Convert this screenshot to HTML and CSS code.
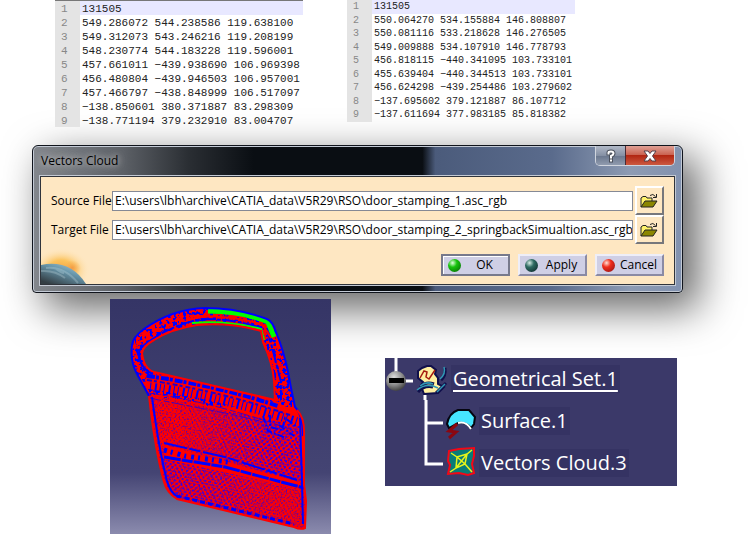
FILE: index.html
```
<!DOCTYPE html>
<html lang="en">
<head>
<meta charset="utf-8">
<title>Vectors Cloud</title>
<link rel="stylesheet" href="styles.css">
</head>
<body>
<section class="files">
  <ol class="listing listing-source">
    <li><span>1</span>131505</li>
    <li><span>2</span>549.286072 544.238586 119.638100</li>
    <li><span>3</span>549.312073 543.246216 119.208199</li>
    <li><span>4</span>548.230774 544.183228 119.596001</li>
    <li><span>5</span>457.661011 −439.938690 106.969398</li>
    <li><span>6</span>456.480804 −439.946503 106.957001</li>
    <li><span>7</span>457.466797 −438.848999 106.517097</li>
    <li><span>8</span>−138.850601 380.371887 83.298309</li>
    <li><span>9</span>−138.771194 379.232910 83.004707</li>
  </ol>
  <ol class="listing listing-target">
    <li><span>1</span>131505</li>
    <li><span>2</span>550.064270 534.155884 146.808807</li>
    <li><span>3</span>550.081116 533.218628 146.276505</li>
    <li><span>4</span>549.009888 534.107910 146.778793</li>
    <li><span>5</span>456.818115 −440.341095 103.733101</li>
    <li><span>6</span>455.639404 −440.344513 103.733101</li>
    <li><span>7</span>456.624298 −439.254486 103.279602</li>
    <li><span>8</span>−137.695602 379.121887 86.107712</li>
    <li><span>9</span>−137.611694 377.983185 85.818382</li>
  </ol>
</section>

<form class="dialog">
  <header class="titlebar">
    <h1>Vectors Cloud</h1>
    <div class="controls">
      <button type="button" class="help" aria-label="Help">
        <svg width="12" height="14" viewBox="0 0 12 14"><g fill="none" stroke-linecap="square"><path d="M3.5 4.5V3.5Q3.5 2.5 6 2.5Q8.5 2.5 8.5 4.5Q8.5 6 6 7V8.5M6 11.5V11.6" stroke="#4a505c" stroke-width="4"/><path d="M3.5 4.5V3.5Q3.5 2.5 6 2.5Q8.5 2.5 8.5 4.5Q8.5 6 6 7V8.5M6 11.5V11.6" stroke="#fff" stroke-width="2"/></g></svg>
      </button>
      <button type="button" class="close" aria-label="Close">
        <svg width="14" height="12" viewBox="0 0 14 12"><path d="M1 1H5L7 3.5L9 1H13L9.5 6L13 11H9L7 8.5L5 11H1L4.5 6Z" fill="#fff" stroke="#53404a"/></svg>
      </button>
    </div>
  </header>
  <div class="panel">
    <svg class="planet" width="48" height="36" viewBox="0 0 48 36">
      <defs>
        <radialGradient id="glow"><stop offset="0" stop-color="#f5a540"/><stop offset=".45" stop-color="#fbc35d"/><stop offset="1" stop-color="#fee7c2" stop-opacity="0"/></radialGradient>
        <radialGradient id="flare"><stop offset="0" stop-color="#f39a45"/><stop offset="1" stop-color="#f7b155" stop-opacity="0"/></radialGradient>
        <linearGradient id="globe" x1="1" y1="0" x2=".2" y2="1"><stop offset="0" stop-color="#b7d2da"/><stop offset=".45" stop-color="#6897ac"/><stop offset="1" stop-color="#333d43"/></linearGradient>
      </defs>
      <ellipse cx="20" cy="22" rx="29" ry="22" fill="url(#glow)"/>
      <ellipse cx="31" cy="20" rx="9" ry="8" fill="url(#flare)"/>
      <path d="M0 17Q29 11 45 36H0Z" fill="url(#globe)"/>
      <path d="M5 20Q23 18 37 35M14 20Q20 25 23 25M0 23Q14 22 24 30" fill="none" stroke="#c5dce0" stroke-width="2" opacity=".3"/>
    </svg>
    <div class="field">
      <label for="source">Source File</label>
      <input id="source" type="text" value="E:\users\lbh\archive\CATIA_data\V5R29\RSO\door_stamping_1.asc_rgb">
      <button type="button" class="browse" aria-label="Browse source file">
        <svg width="18" height="16" viewBox="0 0 18 16"><path d="M1 14V5L3 3.5H6L7 5H12V8" fill="#fff36b" stroke="#222"/><path d="M1 14L5 8H17L13 14Z" fill="#8b8600" stroke="#222"/><path d="M10 2.5Q13 0 15.5 3.5M16.5 1V4.5H13" fill="none" stroke="#222"/></svg>
      </button>
    </div>
    <div class="field">
      <label for="target">Target File</label>
      <input id="target" type="text" value="E:\users\lbh\archive\CATIA_data\V5R29\RSO\door_stamping_2_springbackSimualtion.asc_rgb">
      <button type="button" class="browse" aria-label="Browse target file">
        <svg width="18" height="16" viewBox="0 0 18 16"><path d="M1 14V5L3 3.5H6L7 5H12V8" fill="#fff36b" stroke="#222"/><path d="M1 14L5 8H17L13 14Z" fill="#8b8600" stroke="#222"/><path d="M10 2.5Q13 0 15.5 3.5M16.5 1V4.5H13" fill="none" stroke="#222"/></svg>
      </button>
    </div>
    <div class="actions">
      <button type="button" class="action default"><i class="lamp green"></i><span>OK</span></button>
      <button type="button" class="action"><i class="lamp dark"></i><span>Apply</span></button>
      <button type="button" class="action"><i class="lamp red"></i><span>Cancel</span></button>
    </div>
  </div>
</form>

<section class="results">
  <svg class="door" width="221" height="235" viewBox="0 0 221 235" role="img" aria-label="Door point cloud">
    <defs>
      <linearGradient id="sky" x1="0" y1="0" x2="0" y2="1"><stop offset="0" stop-color="#353566"/><stop offset=".74" stop-color="#444473"/><stop offset="1" stop-color="#8b8bae"/></linearGradient>
      <pattern id="dots" width="5" height="6" patternUnits="userSpaceOnUse" patternTransform="rotate(12)"><path d="M0 1H2V3H0ZM2.5 4H4.5V6H2.5Z" fill="#20f"/></pattern>
      <pattern id="fine" width="4" height="5" patternUnits="userSpaceOnUse" patternTransform="rotate(12)"><path d="M0 0H1V1.5H0ZM2 3H3V4H2Z" fill="#7000a0"/></pattern>
      <filter id="speckle" x="0" y="0" width="1" height="1"><feTurbulence type="fractalNoise" baseFrequency=".3" numOctaves="2" seed="4"/><feColorMatrix values="0 0 0 0 0  0 0 0 0 0  0 0 0 0 1  14 0 0 0 -7.4"/></filter>
      <filter id="grain" x="0" y="0" width="1" height="1"><feTurbulence type="fractalNoise" baseFrequency=".55" numOctaves="2" seed="9"/><feColorMatrix values="0 0 0 0 0  0 0 0 0 0  0 0 0 0 1  14 0 0 0 -8.4"/></filter>
      <linearGradient id="fade" x1="0" y1="0" x2="1" y2="0"><stop offset="0" stop-color="#fff"/><stop offset=".5" stop-color="#ccc"/><stop offset=".75" stop-color="#333"/></linearGradient>
      <linearGradient id="rise" x1="0" y1="0" x2="1" y2="0"><stop offset=".3" stop-color="#000"/><stop offset=".7" stop-color="#fff"/></linearGradient>
      <mask id="lowmask"><rect width="221" height="235" fill="url(#fade)"/></mask>
      <mask id="highmask"><rect width="221" height="235" fill="url(#rise)"/></mask>
      <clipPath id="frame"><path clip-rule="evenodd" d="M22 46Q23 38 34 30Q62 10 95 9Q128 9 157 20Q163 23 166 33Q174 53 178 73Q181 90 185 108Q194 117 194 137V185L196 202L195 229Q191 231 184 228L67 200Q57 194 54 183Q45 151 39 97L27 75Q20 62 22 46ZM32 54Q34 70 44 73L165 101L164 82Q163 65 153 43L151 32Q120 23 87 26Q61 30 44 41Q33 47 32 54Z"/></clipPath>
      <clipPath id="body"><path d="M38 96L190 127L194 185L196 229L184 228L67 200Q56 190 54 183Q46 148 38 96Z"/></clipPath>
    </defs>
    <rect width="221" height="235" fill="url(#sky)"/>
    <g clip-path="url(#frame)">
      <rect width="221" height="235" fill="#f00"/>
      <rect width="221" height="108" filter="url(#speckle)"/>
      <g clip-path="url(#body)">
        <rect y="90" width="221" height="145" fill="#f00"/>
        <rect y="90" width="221" height="145" fill="url(#fine)"/>
        <rect y="90" width="221" height="145" filter="url(#grain)" opacity=".4"/>
        <path d="M70 105L194 125V186L80 155Z" fill="url(#dots)" mask="url(#highmask)"/>
        <path d="M50 158L195 191V235L60 200Z" fill="url(#dots)" mask="url(#lowmask)"/>
      </g>
      <path d="M36 82Q105 91 187 119" fill="none" stroke="#f00" stroke-width="15"/>
      <path d="M37 77Q105 86 168 107" fill="none" stroke="#00f" stroke-width="4" stroke-dasharray="8 1 3 2"/>
      <path d="M37 81Q110 92 180 116" fill="none" stroke="#20c" stroke-width="2" stroke-dasharray="5 2 3 3"/>
      <path d="M40 88Q105 96 188 123" fill="none" stroke="#00f" stroke-width="9" stroke-dasharray="1 4 2 3 1 3"/>
      <path d="M38 94Q105 103 188 133M39 99L120 115L150 122" fill="none" stroke="#40b" stroke-dasharray="12 3 6 2"/>
      <path d="M55 146L190 183L190 190L54 160Z" fill="#f00"/>
      <path d="M54 144L115 158L187 181" fill="none" stroke="#00f" stroke-width="2" stroke-dasharray="24 2 11 3"/>
      <path d="M54 158L115 168L194 189" fill="none" stroke="#00f" stroke-width="3" stroke-dasharray="17 1 11 1"/>
      <path d="M54 151L75 157L118 163" fill="none" stroke="#00f" stroke-width="5" stroke-dasharray="3 4 2 5"/>
      <path d="M153 117L158 132L176 139M160 116V128L172 131L175 119L187 128M169 126L184 137" fill="none" stroke="#00f" stroke-width="2" stroke-dasharray="7 2 2 2"/>
      <path d="M29 53Q31 75 43 77M34 46Q60 26 92 20Q127 20 154 30M157 30L163 52L171 83V101" fill="none" stroke="#00f" stroke-width="2" stroke-dasharray="14 2 4 1"/>
      <path d="M98 12Q133 12 158 23L164 38" fill="none" stroke="#0f0" stroke-width="5"/>
      <path d="M82 24Q116 21 151 30L154 41" fill="none" stroke="#0f0" stroke-width="2"/>
      <path d="M83 17Q125 16 153 26L161 39" fill="none" stroke="#f00" stroke-width="2"/>
      <path d="M45 190Q47 197 67 197L184 225" fill="none" stroke="#00f" stroke-width="3" stroke-dasharray="5 3"/>
    </g>
    <g fill="none">
      <path d="M39 97L27 75Q20 62 22 46Q23 38 34 30Q62 10 95 9Q128 9 157 20Q163 23 166 33Q174 53 178 73Q181 90 185 108Q193 116 193 137" stroke="#00f" stroke-width="2"/>
      <path d="M187 111Q195 119 194 137V185L196 202L195 229Q191 231 184 228L67 200Q57 194 54 183Q45 151 39 97" stroke="#f00" stroke-width="2"/>
      <path d="M190 119L192 185L193 225M42 98Q49 151 57 182Q60 193 68 198" stroke="#00f" stroke-width="2"/>
      <path d="M165 101L44 73Q34 70 32 54Q33 47 44 41Q61 30 87 26Q120 23 151 32L153 43Q163 65 164 82L165 101" stroke="#f00" stroke-width="2"/>
      <path d="M34 46Q24 54 33 67Q37 73 43 75" stroke="#00f" stroke-width="2"/>
    </g>
  </svg>

  <ul class="tree">
    <li class="node">
      <svg width="31" height="42" viewBox="0 0 31 42"><defs><radialGradient id="ball" cx=".4" cy=".3" r=".7"><stop offset="0" stop-color="#ddd"/><stop offset=".6" stop-color="#888"/><stop offset="1" stop-color="#444"/></radialGradient></defs><path d="M11 0V15M19 23H28" stroke="#fff" stroke-width="3"/><circle cx="11" cy="23" r="10" fill="url(#ball)"/><path d="M4 22.500H19" stroke="#000" stroke-width="5"/></svg>
      <svg width="34" height="42" viewBox="0 0 34 42"><path d="M9 37V42" stroke="#fff" stroke-width="3"/><path d="M2 13L6 10L11 8H15L20 12L19 16L22 20V26L28 29L22 35L8 36L5 28L7 24L2 20Z" fill="#fff0a0" stroke="#10104b" stroke-width="2"/><path d="M4 20L8 13L11 14L10 19L13 21L19 12" fill="none" stroke="#a51b10" stroke-width="1.500"/><path d="M2 34Q8 27 17 29M4 29Q10 23 18 26M29 10Q30 18 25 22M20 35L30 25" fill="none" stroke="#10104b" stroke-width="3"/><path d="M1 32Q8 26 17 28L22 30M4 28Q10 23 17 26M28 9Q30 16 24 21M21 34L29 26" fill="none" stroke="#3199b5" stroke-width="1.500"/></svg>
      <span class="name current">Geometrical Set.1</span>
    </li>
    <li>
      <ul class="children">
        <li class="node">
          <svg width="21" height="42" viewBox="0 0 21 42"><path d="M3 0V42M3 23H20" stroke="#fff" stroke-width="3"/></svg>
          <svg width="34" height="42" viewBox="0 0 34 42"><path d="M3 24Q5 13 14 10H25L31 17L30 24L27 28Q22 22 14 23L5 28Z" fill="#46e5ff" stroke="#050510" stroke-width="2"/><path d="M14 23Q22 21 27 29" fill="none" stroke="#fff" stroke-width="2"/><path d="M13 24L5 31L12 32L5 38" fill="none" stroke="#8b0710" stroke-width="3"/></svg>
          <span class="name">Surface.1</span>
        </li>
        <li class="node">
          <svg width="21" height="42" viewBox="0 0 21 42"><path d="M3 0V22H20" fill="none" stroke="#fff" stroke-width="3"/></svg>
          <svg width="34" height="42" viewBox="0 0 34 42"><path d="M5 9L15 7L30 6V14L28 22L30 31L24 33L15 31L4 32L6 23L4 19Z" fill="#087c77" stroke="#f40716" stroke-width="2"/><path d="M7 11L13 15L23 12L28 8M13 15L12 26L21 22L23 12L12 26L6 30M21 22L28 30M13 15L21 22" fill="none" stroke="#e7f51a" stroke-width="1.500"/></svg>
          <span class="name">Vectors Cloud.3</span>
        </li>
      </ul>
    </li>
  </ul>
</section>
</body>
</html>
```
FILE: styles.css
```
* { box-sizing: border-box; }

body {
  margin: 0;
  background: #fff;
  color: #000;
  font: 12px/16px "Open Sans", "Noto Sans", sans-serif;
  overflow: hidden;
}

ol, ul, h1 { margin: 0; padding: 0; list-style: none; }
svg { display: block; flex: none; }

.files {
  display: flex;
  align-items: flex-start;
  gap: 44px;
  padding: 0 55px;
}

.listing {
  display: grid;
  grid-auto-rows: 14px;
  flex: 0 1 248px;
  color: #222;
  font: 11px/16px "Liberation Mono", monospace;
  white-space: pre;
  background: linear-gradient(90deg, #e4e4e4 25px, transparent 25px);
}

.listing-source { border-top: 1px solid #777; }
.listing-target { flex-basis: 228px; font-size: 10px; grid-auto-rows: 1fr; height: 122px; line-height: 13px; }
.listing li { display: flex; }
.listing li:first-child { background: linear-gradient(90deg, #e4e4e4 25px, #e8e8ff 25px); }
.listing span { width: 27px; padding-left: 6px; flex: none; color: #888; }

.dialog {
  margin: 18px 65px 0 32px;
  padding: 0 7px 7px;
  border: 1px solid #10141c;
  border-radius: 6px 6px 4px 4px;
  background: linear-gradient(90deg, #83878d 0, #5c6066 14%, #2a2e33 24%, #0a0e13 34%, #0a0e13 60%, #4b5b7b 62%, #5a6b8c 80%, #8d9bb3 92%, #8292af 100%);
  box-shadow: inset 0 0 0 1px #c3cad5, 14px 14px 40px 2px rgba(0, 0, 0, .6);
}

.titlebar { display: flex; justify-content: space-between; height: 30px; }
.titlebar h1 {
  padding: 6px 1px;
  font-size: 12px;
  font-weight: 400;
  line-height: 17px;
  text-shadow: 0 0 6px #ccc, 0 0 10px #bbb;
}

.controls {
  display: flex;
  height: 20px;
  border: 1px solid #d0d5de;
  border-top: 0;
  border-radius: 0 0 5px 5px;
  overflow: hidden;
}
.controls button { display: grid; place-items: center; margin: 0; padding: 0; border: 0; }
.help { width: 29px; background: linear-gradient(#b1b9c7, #8590a4 50%, #68758c 50%, #909bae); }
.controls .close { width: 49px; border-left: 1px solid #482b35; background: linear-gradient(#dfa095, #c9604e 48%, #b22612 50%, #cc5940); }

.panel {
  position: relative;
  padding: 9px 10px 8px;
  border: 1px solid #30343b;
  outline: 1px solid #c4cad4;
  background: #fee7c2;
}
.planet { position: absolute; left: 0; bottom: 0; }

.field { position: relative; display: flex; align-items: center; height: 29px; }
.field label { width: 61px; flex: none; white-space: nowrap; }
.field input {
  flex: 1;
  min-width: 0;
  height: 20px;
  padding: 0 0 0 2px;
  border: 1px solid #858995;
  background: #fff;
  color: #000;
  font: inherit;
}
.browse, .action {
  margin: 0;
  padding: 0;
  border: 2px solid;
  border-color: #fff #77777b #77777b #fff;
}
.browse { width: 29px; height: 29px; margin-left: 2px; padding: 3px; background: #fee7c2; }

.actions { position: relative; display: flex; justify-content: flex-end; gap: 8px; margin-top: 10px; }
.action {
  display: flex;
  align-items: center;
  width: 69px;
  height: 22px;
  padding-left: 5px;
  border-color: #eeeef8 #8a8aa4 #8a8aa4 #eeeef8;
  background: #cfcfe5;
  color: #000;
  font: inherit;
}
.action span { flex: 1; text-align: center; white-space: nowrap; }
.default { border-color: #77798c; box-shadow: inset 1px 1px #fff; }
.lamp { width: 13px; height: 13px; flex: none; border-radius: 50%; }
.green { background: radial-gradient(circle at 35% 30%, #e3ffe0, #17c40c 35%, #065c07); }
.dark { background: radial-gradient(circle at 35% 30%, #d6ede5, #2d6a61 35%, #071d20); }
.red { background: radial-gradient(circle at 35% 30%, #ffe2d8, #f02d1c 35%, #861016); }

.results { position: relative; display: flex; align-items: flex-start; gap: 54px; padding: 6px 71px 0 110px; }
.tree {
  flex: 1;
  margin-top: 59px;
  padding-bottom: 2px;
  background: #3b3969;
  color: #fff;
  font-size: 20px;
  line-height: 28px;
}
.node { display: flex; align-items: center; height: 42px; white-space: nowrap; }
.children { padding-left: 38px; }
.name { padding: 0 2px; margin-left: 1px; background: #353363; }
.current { text-decoration: underline; text-decoration-thickness: 2px; text-underline-offset: 4px; }
```
